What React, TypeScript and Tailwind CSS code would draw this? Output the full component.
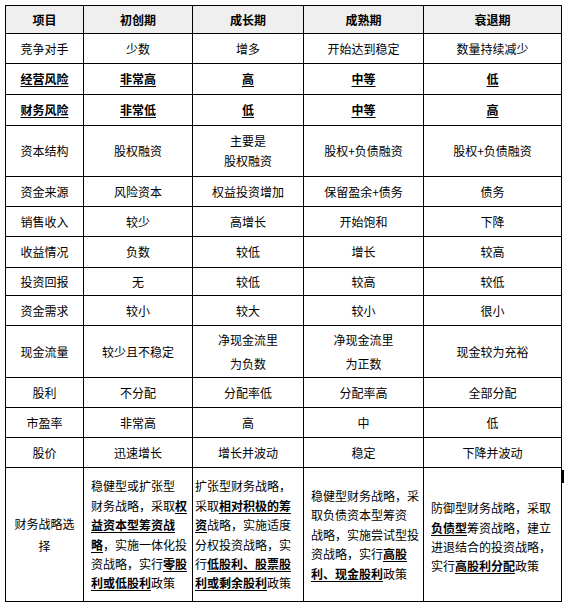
import React from "react";

type Cell = React.ReactNode;

const B = ({ children }: { children: React.ReactNode }) => (
  <span className="font-bold underline underline-offset-2">{children}</span>
);

const rowHeights = [
  "h-[28px]",
  "h-[30px]",
  "h-[31px]",
  "h-[31px]",
  "h-[51px]",
  "h-[30px]",
  "h-[30px]",
  "h-[31px]",
  "h-[28px]",
  "h-[30px]",
  "h-[52px]",
  "h-[30px]",
  "h-[30px]",
  "h-[30px]",
];

const TwoLine = ({ a, b, gap }: { a: string; b: string; gap: string }) => (
  <div className={`flex flex-col items-center ${gap}`}>
    <span>{a}</span>
    <span>{b}</span>
  </div>
);

const rows: Cell[][] = [
  ["竞争对手", "少数", "增多", "开始达到稳定", "数量持续减少"],
  [<B>经营风险</B>, <B>非常高</B>, <B>高</B>, <B>中等</B>, <B>低</B>],
  [<B>财务风险</B>, <B>非常低</B>, <B>低</B>, <B>中等</B>, <B>高</B>],
  [
    "资本结构",
    "股权融资",
    <TwoLine a="主要是" b="股权融资" gap="gap-[4px]" />,
    "股权+负债融资",
    "股权+负债融资",
  ],
  ["资金来源", "风险资本", "权益投资增加", "保留盈余+债务", "债务"],
  ["销售收入", "较少", "高增长", "开始饱和", "下降"],
  ["收益情况", "负数", "较低", "增长", "较高"],
  ["投资回报", "无", "较低", "较高", "较低"],
  ["资金需求", "较小", "较大", "较小", "很小"],
  [
    "现金流量",
    "较少且不稳定",
    <TwoLine a="净现金流里" b="为负数" gap="gap-[8px]" />,
    <TwoLine a="净现金流里" b="为正数" gap="gap-[8px]" />,
    "现金较为充裕",
  ],
  ["股利", "不分配", "分配率低", "分配率高", "全部分配"],
  ["市盈率", "非常高", "高", "中", "低"],
  ["股价", "迅速增长", "增长并波动", "稳定", "下降并波动"],
];

const headers = ["项目", "初创期", "成长期", "成熟期", "衰退期"];

const cellBase =
  "border-r border-b border-black flex items-center justify-center text-center";

export default function App() {
  return (
    <div
      className="w-[570px] h-[615px] bg-white text-black text-[12px] leading-[16px]"
      style={{ fontFamily: '"Noto Sans CJK SC", "Noto Sans", sans-serif' }}
    >
      <div className="pt-[5px] pl-[5px]">
        <div className="relative w-fit border-l border-t border-black">
          <div className="grid grid-cols-[78px_109px_111px_120px_138px]">
            {headers.map((h, i) => (
              <div
                key={"h" + i}
                className={`${cellBase} h-[28px] bg-[#efefef] font-bold`}
              >
                {h}
              </div>
            ))}
            {rows.map((r, ri) =>
              r.map((c, ci) => (
                <div key={ri + "-" + ci} className={`${cellBase} ${rowHeights[ri + 1]}`}>
                  {c}
                </div>
              ))
            )}
            {/* last row */}
            <div className={`${cellBase} h-[134px] px-[8px] leading-[22px]`}>
              财务战略选择
            </div>
            <div className="border-r border-b border-black h-[134px] flex items-center pl-[7px] leading-[19.4px]">
              <div className="flex flex-col whitespace-nowrap">
                <span>稳健型或扩张型</span>
                <span>
                  财务战略，采取<B>权</B>
                </span>
                <span>
                  <B>益资本型筹资战</B>
                </span>
                <span>
                  <B>略</B>，实施一体化投
                </span>
                <span>
                  资战略，实行<B>零股</B>
                </span>
                <span>
                  <B>利或低股利</B>政策
                </span>
              </div>
            </div>
            <div className="border-r border-b border-black h-[134px] flex items-center pl-[2px] leading-[19.4px]">
              <div className="flex flex-col whitespace-nowrap">
                <span>扩张型财务战略，</span>
                <span>
                  采取<B>相对积极的筹</B>
                </span>
                <span>
                  <B>资</B>战略，实施适度
                </span>
                <span>分权投资战略，实</span>
                <span>
                  行<B>低股利、股票股</B>
                </span>
                <span>
                  <B>利或剩余股利</B>政策
                </span>
              </div>
            </div>
            <div className="border-r border-b border-black h-[134px] flex items-center pl-[7px] leading-[19.4px]">
              <div className="flex flex-col whitespace-nowrap">
                <span>稳健型财务战略，采</span>
                <span>取负债资本型筹资</span>
                <span>战略，实施尝试型投</span>
                <span>
                  资战略，实行<B>高股</B>
                </span>
                <span>
                  <B>利、现金股利</B>政策
                </span>
              </div>
            </div>
            <div className="border-r border-b border-black h-[134px] flex items-center pl-[7px] pt-[5px] leading-[19.4px]">
              <div className="flex flex-col whitespace-nowrap">
                <span>防御型财务战略，采取</span>
                <span>
                  <B>负债型</B>筹资战略，建立
                </span>
                <span>进退结合的投资战略，</span>
                <span>
                  实行<B>高股利分配</B>政策
                </span>
              </div>
            </div>
          </div>
          <div className="absolute left-[555px] top-[464px] w-[3px] h-[13px] bg-black" />
        </div>
      </div>
    </div>
  );
}
